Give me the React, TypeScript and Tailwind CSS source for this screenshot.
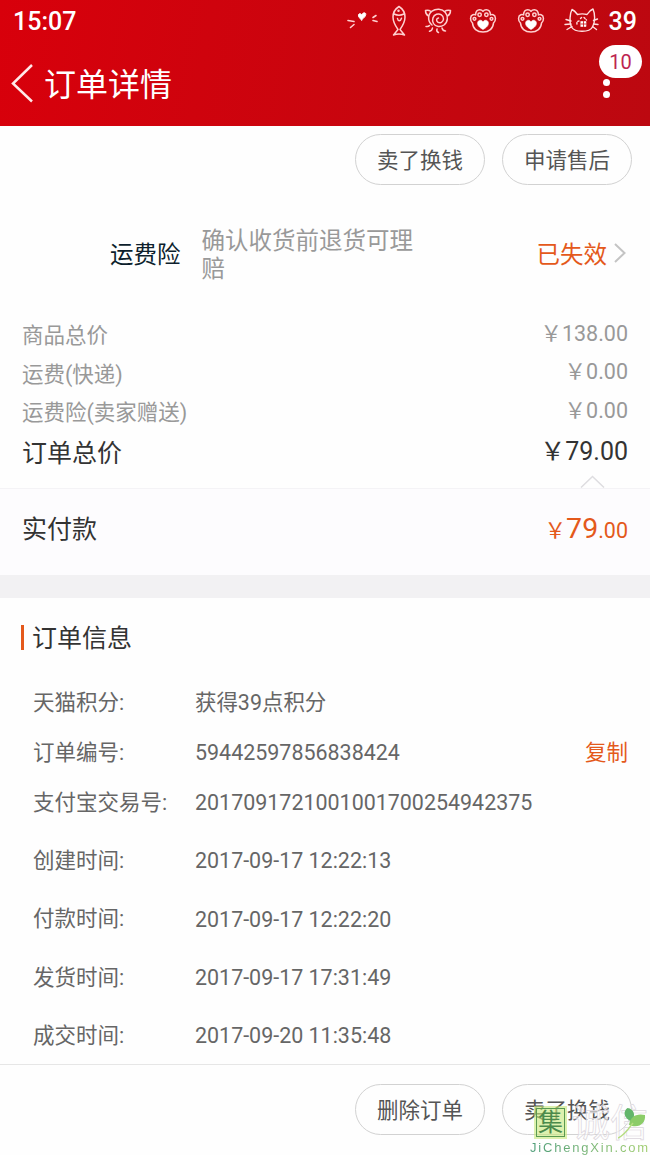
import React from 'react';

const priceRows = [
  { label: '商品总价', value: '￥138.00' },
  { label: '运费(快递)', value: '￥0.00' },
  { label: '运费险(卖家赠送)', value: '￥0.00' },
];

const orderInfo = [
  { label: '天猫积分:', value: '获得39点积分' },
  { label: '订单编号:', value: '59442597856838424', copy: true },
  { label: '支付宝交易号:', value: '2017091721001001700254942375' },
];

const orderTimes = [
  { label: '创建时间:', value: '2017-09-17 12:22:13' },
  { label: '付款时间:', value: '2017-09-17 12:22:20' },
  { label: '发货时间:', value: '2017-09-17 17:31:49' },
  { label: '成交时间:', value: '2017-09-20 11:35:48' },
];

function SignalIcon() {
  return (
    <svg width="32" height="30" viewBox="0 0 32 30" fill="none" stroke="#ffd0d0" strokeWidth="1.6" strokeLinecap="round">
      <path d="M1 14.500 7 15.500M3.500 21.500 7 18.500M26 11.500l3-2M26 14.500l4 1" />
      <path d="M14.500 17c-2-2-3.500-3.500-3-5.500.8-1.400 2.700-1 3.200.6.900-2.400 3-3 4-1.500.6 2.200-1.800 4.400-4.200 6.400z" transform="translate(0 -3)" fill="#fff" stroke="#fff" strokeWidth="1" />
    </svg>
  );
}

function FishIcon() {
  return (
    <svg width="16" height="32" viewBox="0 0 16 32" fill="none" stroke="#ffd0d0" strokeWidth="1.500" strokeLinecap="round" strokeLinejoin="round">
      <path d="M8 1.500C4 4 2 8 2 12c0 5 2.500 9 5 12.500L2.500 30c3-1 8-1 11 0L9 24.500c2.500-3.500 5-7.500 5-12.500 0-4-2-8-6-10.500z" />
      <path d="M3 9c3 1.500 7 1.500 10 0M6.500 13.500c.5 3 3 3 4-.2" />
      <circle cx="7.500" cy="5.800" r=".5" fill="#fff" />
    </svg>
  );
}

function SpiralIcon() {
  return (
    <svg width="28" height="28" viewBox="0 0 28 28" fill="none" stroke="#ffd0d0" strokeWidth="1.500" strokeLinecap="round" strokeLinejoin="round">
      <path d="M7 4.500C5 3 3 3 1.500 3.500 1.500 6 2.500 8 4.500 9M20.500 4.500c2-1.500 4-1.500 6-1 0 2.500-1 4.500-3 5.500" />
      <path d="M8 18C3.500 14.500 3.500 7.500 8 4.200c4-2.900 10-2.600 13.200 1C24.500 9 24 15 20 18c-3.500 2.500-8.500 2-10.500-1.500-2-3.800-.5-8 3-9.200 3.500-1.200 7.200 1 7 4.700-.2 3-3.300 4.700-5.700 3.200-1.800-1.200-1.500-4 .7-4.200" />
      <path d="M5.500 18.500c-.8 1-2 1.300-3.500 1M8.500 21c-.3 1.800-1.500 3-3 3.300M13 22c-.5 1.500.2 3 1.500 3.500M18 21c.5 2 1.700 3 3.500 3" />
    </svg>
  );
}

function PawIcon() {
  return (
    <svg width="28" height="26" viewBox="0 0 28 26" fill="none" stroke="#ffd0d0" strokeWidth="1.500" strokeLinejoin="round">
      <path d="M3.500 15C.8 12.500.9 8 3.800 6.800c.9-.4 2-.3 2.800.1C6.500 3.500 8.300 1.700 10.700 1.700c1.400 0 2.600.6 3.300 1.700.7-1.100 1.900-1.700 3.300-1.700 2.400 0 4.200 1.800 4.100 5.200.8-.4 1.900-.5 2.800-.1 2.900 1.200 3 5.700.3 8.200C24.200 20.500 20 24 14 24S3.800 20.500 3.500 15z" />
      <circle cx="10.600" cy="6.800" r="1.700" />
      <circle cx="17.400" cy="6.800" r="1.700" />
      <circle cx="5.500" cy="10.800" r="1.400" />
      <circle cx="22.500" cy="10.800" r="1.400" />
      <path d="M14 21.500c-3.600-2-6-4.200-5.300-7.200.8-2.600 4-2.800 5.300-.4 1.300-2.400 4.500-2.200 5.300.4.700 3-1.700 5.200-5.300 7.200z" fill="#fff" stroke="#fff" strokeWidth=".6" />
    </svg>
  );
}

function CatIcon() {
  return (
    <svg width="36" height="28" viewBox="0 0 36 28" fill="none" stroke="#ffe0e0" strokeWidth="1.400" strokeLinecap="round" strokeLinejoin="round">
      <path d="M7.500 20C5 15.500 6 6 8 2.500c2.500 1 4 3 5.500 5 3-.8 6.500-.8 9.500 0C24.500 5 26.500 3 29 2c2 4.500 2.500 13-.5 18-3 5.500-17.500 6-21 0z" />
      <path d="M2 12.500l5 1.500M1 17.500l6-.5M3 22.500l5-3M29.500 13.500l4-1.500M29.500 17l4.500.5M28.500 19.500l4 3" />
      <path d="M13 17c-.5-2 .5-3 2-3M16.500 11.500l1.500-1.500M20 10.500l2.500 2.500" strokeDasharray="1.500 1.500" />
      <rect x="17" y="14.500" width="5" height="5" fill="#fff" stroke="#fff" strokeWidth=".6" />
      <path d="M19.500 14.500v5M17 17h5" stroke="#c60a10" strokeWidth=".8" />
    </svg>
  );
}

function PillButton({ children }: { children: React.ReactNode }) {
  return (
    <button className="w-[130px] h-[51px] rounded-full border border-[#d2d2d2] text-[21.5px] text-[#555555] pt-[3px]">
      {children}
    </button>
  );
}

function InfoRow({ label, value, copy, className }: { label: string; value: string; copy?: boolean; className: string }) {
  return (
    <div className={`flex items-center text-[21.5px] text-[#666666] ${className}`}>
      <span className="w-[162px] shrink-0 whitespace-nowrap">{label}</span>
      <span className="flex-1 whitespace-nowrap text-[21.45px]">{value}</span>
      {copy && <button className="text-[#e4591b]">复制</button>}
    </div>
  );
}

function Watermark() {
  return (
    <div className="absolute right-0 bottom-0 w-[120px] h-[49px]">
      <div className="flex items-start">
        <div className="ml-[4px] w-[33px] h-[33px] shrink-0 bg-[#c6e878]/60 p-[2px]">
          <div className="w-full h-full border-[1.5px] border-[#5a9a50] flex items-center justify-center text-[25px] leading-none text-[#4c8b4c]">
            集
          </div>
        </div>
        <div className="ml-[5px] -mt-[2px] text-[38px] leading-[38px] whitespace-nowrap text-white/60 [-webkit-text-stroke:0.7px_#dcd6dd]">
          诚信
        </div>
      </div>
      <svg className="absolute right-[2px] top-0" width="30" height="36" viewBox="0 0 30 36">
        <path d="M14 16C5 12 5 5 9.500 2c6.500 1 8.500 7 4.500 14z" fill="#63b56b" />
        <path d="M11 19c1-8 7-12 16-10 1 8-6 14-16 10z" fill="#8bcc68" />
        <path d="M15 17C11 22 7 29 0 32" fill="none" stroke="#b5dd80" strokeWidth="1.500" />
      </svg>
      <div className="absolute left-0 bottom-0 text-[13px] leading-[15px] tracking-[1.8px] whitespace-nowrap font-['Liberation_Sans',sans-serif] bg-linear-to-r from-[#4d9d78] to-[#a3cf70] bg-clip-text text-transparent">
        JiChengXin.com
      </div>
    </div>
  );
}

export default function App() {
  return (
    <div className="relative w-[650px] h-[1155px] overflow-hidden flex flex-col bg-[#fefefe] font-['Roboto','Noto_Sans_CJK_SC',sans-serif]">
      <header className="h-[126px] shrink-0 bg-linear-100 from-[#d8000b] to-[#bc0810] text-white">
        {/* Status bar */}
        <div className="h-[42px] flex items-center justify-between pl-[13px] pr-[13px]">
          <span className="text-[25px] font-medium leading-none">15:07</span>
          <div className="flex items-center">
            <SignalIcon />
            <span className="ml-[12px]"><FishIcon /></span>
            <span className="ml-[17px]"><SpiralIcon /></span>
            <span className="ml-[17px]"><PawIcon /></span>
            <span className="ml-[20px]"><PawIcon /></span>
            <span className="ml-[19px]"><CatIcon /></span>
            <span className="ml-[9px] text-[25px] font-medium leading-none">39</span>
          </div>
        </div>
        {/* Title bar */}
        <div className="relative h-[84px] flex items-center pl-[11px]">
          <svg className="-mt-[2px]" width="24" height="40" viewBox="0 0 24 40" fill="none" stroke="#ffe9e9" strokeWidth="2.500">
            <path d="M21 2 2 20.500 21 38.500" />
          </svg>
          <h1 className="ml-[9px] mt-[2px] text-[32px] leading-none">订单详情</h1>
          <div className="ml-auto mr-[40px] mt-[9px] flex flex-col gap-[5px]">
            <i className="w-[7px] h-[7px] rounded-full bg-white" />
            <i className="w-[7px] h-[7px] rounded-full bg-white" />
          </div>
          <span className="absolute right-[8px] top-[3px] w-[43px] h-[33px] rounded-full bg-white text-[#bd2550] text-[20px] flex items-center justify-center">
            10
          </span>
        </div>
      </header>

      <div className="flex justify-end gap-[17px] pt-2 pr-[18px]">
        <PillButton>卖了换钱</PillButton>
        <PillButton>申请售后</PillButton>
      </div>

      {/* Freight insurance */}
      <div className="mt-[34px] h-[70px] flex items-center pl-[110px] pr-[24px] text-[23.5px]">
        <span className="pt-[3px] text-[#0d1f2d]">运费险</span>
        <span className="ml-[21px] w-[215px] pt-[2px] leading-[28px] text-[#999999]">确认收货前退货可理赔</span>
        <span className="ml-auto pt-[3px] text-[#e4591b]">已失效</span>
        <svg className="ml-[7px] -mt-[2px]" width="12" height="20" viewBox="0 0 12 20" fill="none" stroke="#c4c4c4" strokeWidth="2">
          <path d="m1 1 9.500 9L1 19" />
        </svg>
      </div>

      {/* Price summary */}
      <div className="relative h-[200px] pt-[27px] px-[22px] border-b border-[#f4f3f6]">
        {priceRows.map((row) => (
          <div key={row.label} className="h-[38.5px] flex items-center justify-between text-[21.5px] text-[#999999]">
            <span className="pt-[2px]">{row.label}</span>
            <span className="-mt-[3px]">{row.value}</span>
          </div>
        ))}
        <div className="h-[44px] flex items-center justify-between text-[25px] text-[#333333]">
          <span className="pt-[1px]">订单总价</span>
          <span className="-mt-[3px]">￥79.00</span>
        </div>
        <svg className="absolute right-[45px] bottom-0" width="25" height="13" viewBox="0 0 25 13" fill="none" stroke="#dedde0" strokeWidth="1.500">
          <path d="M1 12.500 12.500 1.500 24 12.500" />
        </svg>
      </div>
      <div className="h-[86px] pb-[7px] px-[22px] flex items-center justify-between bg-[#fdfcfe]">
        <span className="pt-[3px] text-[25px] text-[#333333]">实付款</span>
        <span className="pt-[1px] text-[21.5px] text-[#e4591b]">
          ￥<span className="text-[28.5px]">79</span>.00
        </span>
      </div>
      <div className="h-[23px] bg-[#f2f1f3]" />

      {/* Order info */}
      <div className="h-[466px] pt-[20px] pl-[33px] pr-[22px]">
        <h2 className="-ml-[12px] mb-[20px] h-[40px] flex items-center text-[25px] text-[#333333]">
          <i className="w-[3px] h-[25px] mr-[8px] -mt-[2px] bg-[#e4591b]" />
          <span className="pt-[2px]">订单信息</span>
        </h2>
        {orderInfo.map((row) => (
          <InfoRow key={row.label} {...row} className="h-[50px]" />
        ))}
        <div className="mt-[4px]">
          {orderTimes.map((row) => (
            <InfoRow key={row.label} {...row} className="h-[58.4px]" />
          ))}
        </div>
      </div>

      <footer className="flex-1 flex justify-end gap-[17px] pt-[19px] pr-[18px] border-t border-[#e6e6e6]">
        <PillButton>删除订单</PillButton>
        <PillButton>卖了换钱</PillButton>
      </footer>
      <Watermark />
    </div>
  );
}
